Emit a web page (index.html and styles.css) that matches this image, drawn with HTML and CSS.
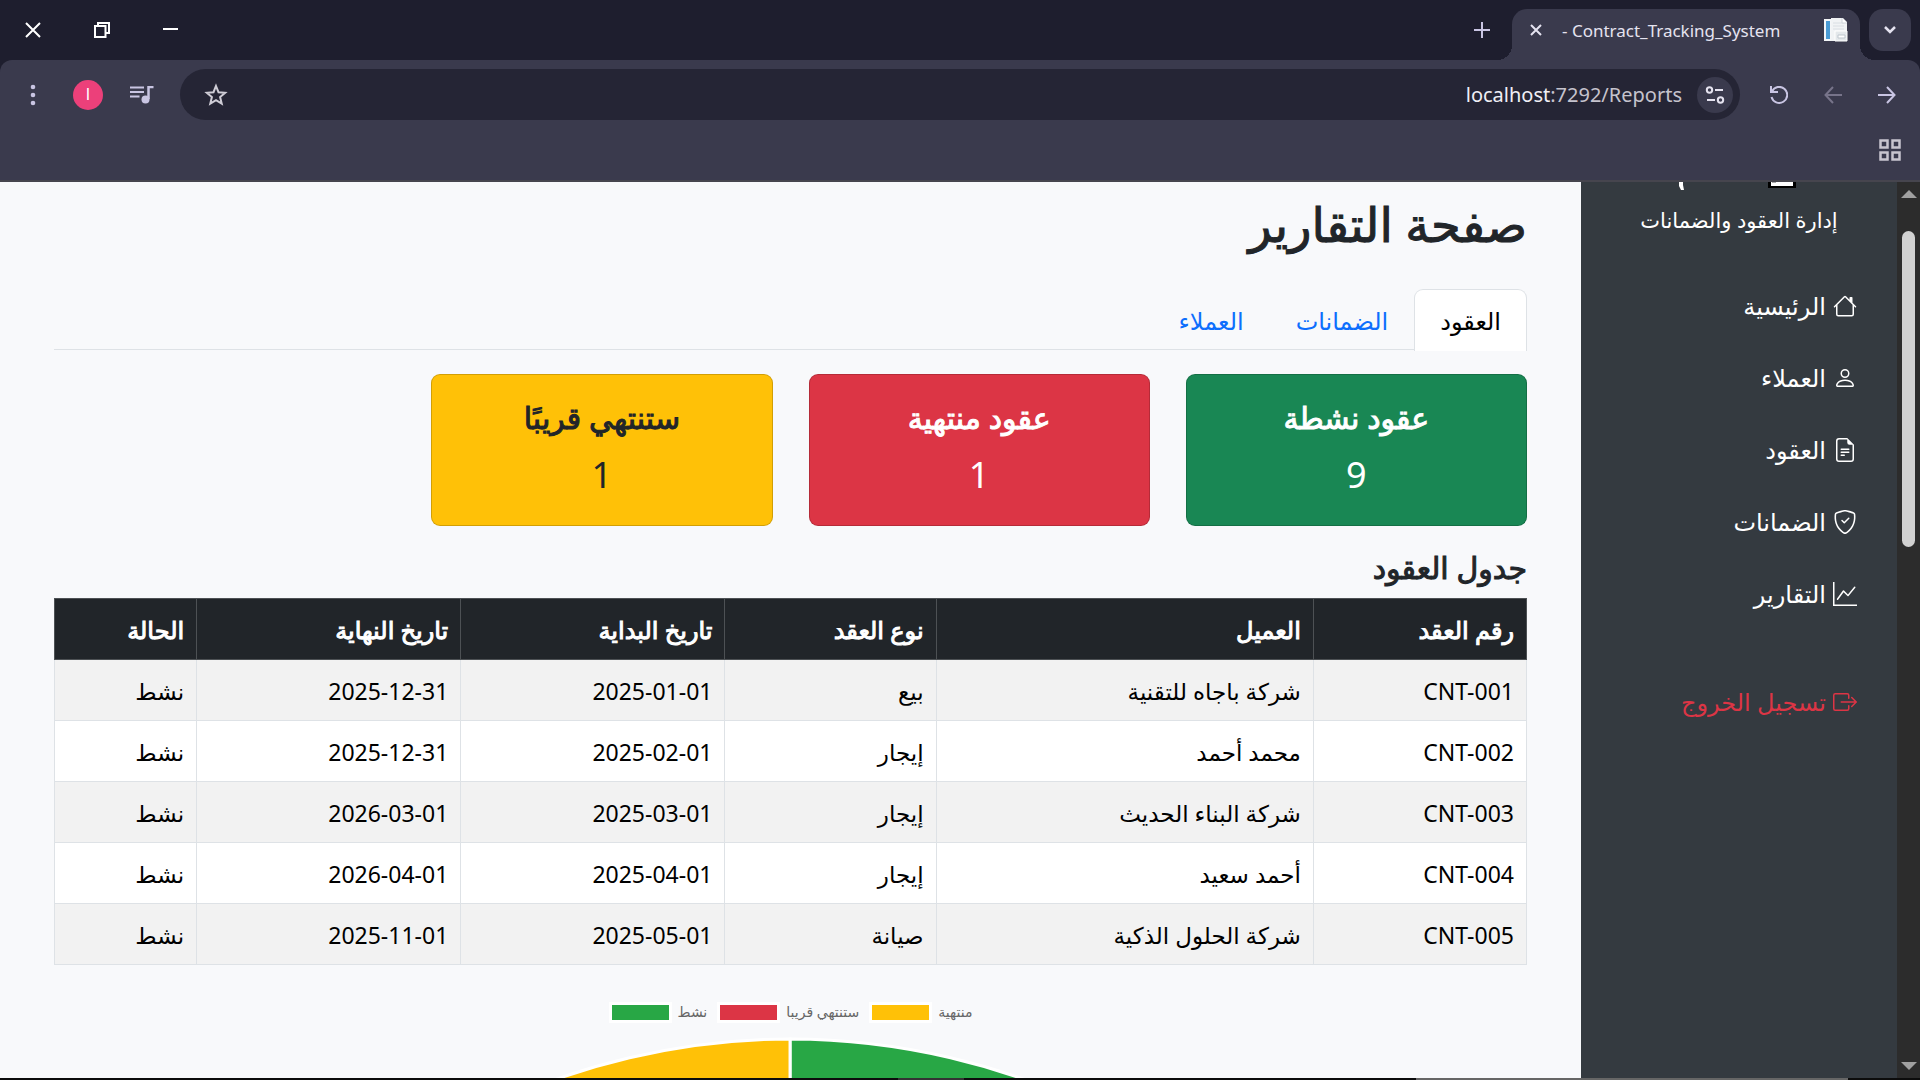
FILE: index.html
```html
<!DOCTYPE html>
<html lang="ar" dir="rtl">
<head>
<meta charset="utf-8">
<title>- Contract_Tracking_System</title>
<link rel="stylesheet" href="styles.css">
</head>
<body>
<div class="window">
  <header class="browser" dir="ltr">
    <div class="tabstrip">
      <div class="window-controls">
        <button class="plain" aria-label="إغلاق"><svg width="16" height="16" viewBox="0 0 16 16"><path d="M1 1l14 14M15 1L1 15" stroke="#fff" stroke-width="2"/></svg></button>
        <button class="plain" aria-label="استعادة"><svg width="16" height="16" viewBox="0 0 16 16" fill="none" stroke="#fff" stroke-width="2"><path d="M1 4h10.500v11H1z"/><path d="M4 4V1h11v10h-3"/></svg></button>
        <button class="plain" aria-label="تصغير"><svg width="16" height="16" viewBox="0 0 16 16"><path d="M0 7h15" stroke="#fff" stroke-width="2"/></svg></button>
      </div>
      <div class="tabs">
        <button class="plain new-tab" aria-label="علامة تبويب جديدة"><svg width="16" height="16" viewBox="0 0 16 16"><path d="M8 0v16M0 8h16" stroke="#c9c5e3" stroke-width="2"/></svg></button>
        <div class="tab">
          <button class="plain" aria-label="إغلاق علامة التبويب"><svg width="12" height="12" viewBox="0 0 12 12"><path d="M1 1l10 10M11 1L1 11" stroke="#e5e3f0" stroke-width="2"/></svg></button>
          <span class="tab-title">- Contract_Tracking_System</span>
          <svg width="24" height="24" viewBox="0 0 24 24"><path d="M0 1h7v22H0z" fill="#f4f6f8"/><path d="M2 3h4v18H2z" fill="#4a9bd4"/><path d="M7 0h12l4 4v19H7z" fill="#f1f3f5"/><path d="M9 5h11M9 8h11M9 11h11" stroke="#d9dee3"/><path d="M18 0v5h5" fill="#fff" stroke="#cfd4da"/><path d="M11 13h12v10H11z" fill="#e4e8eb" stroke="#fff"/><path d="M14 17h7v3h-7z" fill="#fff" stroke="#bfc7ce"/></svg>
        </div>
        <button class="tab-search" aria-label="بحث في علامات التبويب"><svg width="12" height="8" viewBox="0 0 12 8"><path d="M1 1l5 5 5-5" fill="none" stroke="#e5e3f0" stroke-width="2.500"/></svg></button>
      </div>
    </div>
    <div class="toolbar">
      <div class="tool-group">
        <button class="plain" aria-label="القائمة"><svg width="6" height="24" viewBox="0 0 6 24" fill="#c9c5e3"><circle cx="3" cy="4" r="2.300"/><circle cx="3" cy="12" r="2.300"/><circle cx="3" cy="20" r="2.300"/></svg></button>
        <button class="avatar">I</button>
        <button class="plain" aria-label="الوسائط"><svg width="24" height="18" viewBox="0 0 24 18"><path d="M0 1.500h14M0 6h14M0 10.500h9.500" stroke="#c9c5e3" stroke-width="2"/><path d="M18.500 13V1h5" fill="none" stroke="#c9c5e3" stroke-width="2.500"/><circle cx="15.500" cy="13.500" r="4" fill="#c9c5e3"/></svg></button>
      </div>
      <div class="omnibox">
        <button class="plain" aria-label="إضافة إشارة"><svg width="24" height="24" viewBox="0 0 24 24"><path d="M12 3l2.500 6.200 6.700.5-5.100 4.400 1.600 6.500-5.700-3.500-5.700 3.500 1.600-6.500L2.800 9.700l6.700-.5z" fill="none" stroke="#cfcdd6" stroke-width="2"/></svg></button>
        <div class="address"><span class="host">localhost</span><span>:7292/Reports</span></div>
        <button class="site-info" aria-label="معلومات الموقع"><svg width="20" height="18" viewBox="0 0 20 18" fill="none" stroke="#e5e3f0" stroke-width="2"><circle cx="4.500" cy="4" r="2.700"/><path d="M10 4h8M2 14h8"/><circle cx="15.500" cy="14" r="2.700"/></svg></button>
      </div>
      <div class="tool-group nav-group">
        <button class="plain" aria-label="إعادة التحميل"><svg width="18" height="18" viewBox="0 0 18 18" fill="none" stroke="#c9c5e3" stroke-width="2"><path d="M1 0v6h7M2 5.500A8 8 0 1 1 1.500 11"/></svg></button>
        <button class="plain" aria-label="التالي"><svg width="18" height="18" viewBox="0 0 18 18" fill="none" stroke="#77748a" stroke-width="2"><path d="M18 9H2M9 1L1.500 9 9 17"/></svg></button>
        <button class="plain" aria-label="السابق"><svg width="18" height="18" viewBox="0 0 18 18" fill="none" stroke="#c9c5e3" stroke-width="2"><path d="M0 9h16M9 1l7.500 8L9 17"/></svg></button>
      </div>
    </div>
    <div class="bookmarks">
      <button class="plain" aria-label="التطبيقات"><svg width="22" height="22" viewBox="0 0 22 22" fill="none" stroke="#c8c5cf" stroke-width="2.500"><path d="M1.500 1.500h7v7h-7zM13.500 1.500h7v7h-7zM1.500 13.500h7v7h-7zM13.500 13.500h7v7h-7z"/></svg></button>
    </div>
  </header>

  <div class="viewport">
    <div class="scrollbar" aria-hidden="true">
      <svg width="16" height="8" viewBox="0 0 16 8"><path d="M8 0l8 8H0z" fill="#a0a0a0"/></svg>
      <div class="track"><div class="thumb"></div></div>
      <svg width="16" height="8" viewBox="0 0 16 8"><path d="M0 0h16L8 8z" fill="#a0a0a0"/></svg>
    </div>
    <aside class="sidebar">
      <div class="brand">
        <svg width="120" height="8" viewBox="0 0 120 8"><path d="M0 0h4v3l1 5H2L0 4z" fill="#fff"/><path d="M89 0h28v6H89z" fill="#000"/><path d="M92 0h22v4H92z" fill="#fff"/><path d="M93 0h4v1h-4z" fill="#aaa"/></svg>
        <p class="brand-sub">إدارة العقود والضمانات</p>
      </div>
      <nav class="menu">
        <a href="#"><svg class="icon" viewBox="0 0 16 16"><path d="M8.707 1.500a1 1 0 0 0-1.414 0L.646 8.146a.5.5 0 0 0 .708.708L2 8.207V13.500A1.500 1.500 0 0 0 3.500 15h9a1.500 1.500 0 0 0 1.500-1.500V8.207l.646.647a.5.5 0 0 0 .708-.708L13 5.793V2.500a.5.5 0 0 0-.5-.5h-1a.5.5 0 0 0-.5.5v1.293zM13 7.207V13.500a.5.5 0 0 1-.5.5h-9a.5.5 0 0 1-.5-.5V7.207l5-5z"/></svg>الرئيسية</a>
        <a href="#"><svg class="icon" viewBox="0 0 16 16"><path d="M8 8a3 3 0 1 0 0-6 3 3 0 0 0 0 6m2-3a2 2 0 1 1-4 0 2 2 0 0 1 4 0m4 8c0 1-1 1-1 1H3s-1 0-1-1 1-4 6-4 6 3 6 4m-1-.004c-.001-.246-.154-.986-.832-1.664C11.516 10.680 10.289 10 8 10s-3.516.68-4.168 1.332c-.678.678-.83 1.418-.832 1.664z"/></svg>العملاء</a>
        <a href="#"><svg class="icon" viewBox="0 0 16 16"><path d="M5.500 7a.5.5 0 0 0 0 1h5a.5.5 0 0 0 0-1zM5 9.500a.5.5 0 0 1 .5-.5h5a.5.5 0 0 1 0 1h-5a.5.5 0 0 1-.5-.5m0 2a.5.5 0 0 1 .5-.5h2a.5.5 0 0 1 0 1h-2a.5.5 0 0 1-.5-.5"/><path d="M9.500 0H4a2 2 0 0 0-2 2v12a2 2 0 0 0 2 2h8a2 2 0 0 0 2-2V4.500zm0 1v2A1.500 1.500 0 0 0 11 4.500h2V14a1 1 0 0 1-1 1H4a1 1 0 0 1-1-1V2a1 1 0 0 1 1-1z"/></svg>العقود</a>
        <a href="#"><svg class="icon" viewBox="0 0 16 16"><path d="M5.338 1.590a61 61 0 0 0-2.837.856.480.480 0 0 0-.328.390c-.554 4.157.726 7.190 2.253 9.188a10.700 10.700 0 0 0 2.287 2.233c.346.244.652.420.893.533q.180.085.293.118a1 1 0 0 0 .101.025 1 1 0 0 0 .100-.025q.114-.034.294-.118c.240-.113.547-.290.893-.533a10.700 10.700 0 0 0 2.287-2.233c1.527-1.997 2.807-5.031 2.253-9.188a.480.480 0 0 0-.328-.390c-.651-.213-1.750-.560-2.837-.855C9.552 1.290 8.531 1.067 8 1.067c-.530 0-1.552.223-2.662.524zM5.072.560C6.157.265 7.310 0 8 0s1.843.265 2.928.560c1.110.300 2.229.655 2.887.870a1.540 1.540 0 0 1 1.044 1.262c.596 4.477-.787 7.795-2.465 9.990a11.800 11.800 0 0 1-2.517 2.453 7 7 0 0 1-1.048.625c-.280.132-.581.240-.829.240s-.548-.108-.829-.240a7 7 0 0 1-1.048-.625 11.800 11.800 0 0 1-2.517-2.453C1.928 10.487.545 7.169 1.141 2.692A1.540 1.540 0 0 1 2.185 1.430 63 63 0 0 1 5.072.560"/><path d="M10.854 5.146a.5.5 0 0 1 0 .708l-3 3a.5.5 0 0 1-.708 0l-1.500-1.500a.5.5 0 1 1 .708-.708L7.500 7.793l2.646-2.647a.5.5 0 0 1 .708 0"/></svg>الضمانات</a>
        <a href="#"><svg class="icon" viewBox="0 0 16 16"><path d="M0 0h1v15h15v1H0zm14.817 3.113a.5.5 0 0 1 .070.704l-4.500 5.500a.5.5 0 0 1-.740.037L7.060 6.767l-3.656 5.027a.5.5 0 0 1-.808-.588l4-5.500a.5.5 0 0 1 .758-.060l2.609 2.610 4.150-5.073a.5.5 0 0 1 .704-.070"/></svg>التقارير</a>
        <a href="#" class="logout"><svg class="icon" viewBox="0 0 16 16"><path d="M10 12.500a.5.5 0 0 1-.5.5h-8a.5.5 0 0 1-.5-.5v-9a.5.5 0 0 1 .5-.5h8a.5.5 0 0 1 .5.5v2a.5.5 0 0 0 1 0v-2A1.500 1.500 0 0 0 9.500 2h-8A1.500 1.500 0 0 0 0 3.500v9A1.500 1.500 0 0 0 1.500 14h8a1.500 1.500 0 0 0 1.500-1.500v-2a.5.5 0 0 0-1 0z"/><path d="M15.854 8.354a.5.5 0 0 0 0-.708l-3-3a.5.5 0 0 0-.708.708L14.293 7.500H5.500a.5.5 0 0 0 0 1h8.793l-2.147 2.146a.5.5 0 0 0 .708.708z"/></svg>تسجيل الخروج</a>
      </nav>
    </aside>
    <main class="content">
      <h1>صفحة التقارير</h1>
      <div class="nav-tabs" role="tablist">
        <button class="nav-tab active" role="tab">العقود</button>
        <button class="nav-tab" role="tab">الضمانات</button>
        <button class="nav-tab" role="tab">العملاء</button>
      </div>
      <section class="cards">
        <div class="card green"><h2>عقود نشطة</h2><p>9</p></div>
        <div class="card red"><h2>عقود منتهية</h2><p>1</p></div>
        <div class="card yellow"><h2>ستنتهي قريبًا</h2><p>1</p></div>
      </section>
      <h2 class="table-title">جدول العقود</h2>
      <table>
        <colgroup><col class="c-id"><col class="c-client"><col class="c-type"><col class="c-date"><col class="c-date"><col class="c-state"></colgroup>
        <thead><tr><th>رقم العقد</th><th>العميل</th><th>نوع العقد</th><th>تاريخ البداية</th><th>تاريخ النهاية</th><th>الحالة</th></tr></thead>
        <tbody>
          <tr><td>CNT-001</td><td>شركة باجاه للتقنية</td><td>بيع</td><td>2025-01-01</td><td>2025-12-31</td><td>نشط</td></tr>
          <tr><td>CNT-002</td><td>محمد أحمد</td><td>إيجار</td><td>2025-02-01</td><td>2025-12-31</td><td>نشط</td></tr>
          <tr><td>CNT-003</td><td>شركة البناء الحديث</td><td>إيجار</td><td>2025-03-01</td><td>2026-03-01</td><td>نشط</td></tr>
          <tr><td>CNT-004</td><td>أحمد سعيد</td><td>إيجار</td><td>2025-04-01</td><td>2026-04-01</td><td>نشط</td></tr>
          <tr><td>CNT-005</td><td>شركة الحلول الذكية</td><td>صيانة</td><td>2025-05-01</td><td>2025-11-01</td><td>نشط</td></tr>
        </tbody>
      </table>
      <div class="chart">
        <div class="legend">
          <span class="swatch s-green"></span><span class="legend-label">نشط</span>
          <span class="swatch s-red"></span><span class="legend-label">ستنتهي قريبا</span>
          <span class="swatch s-yellow"></span><span class="legend-label">منتهية</span>
        </div>
        <svg class="pie" viewBox="0 0 1410 1410" stroke="#fff" stroke-width="3"><path d="M705 705V2A703 703 0 0 1 1313 1056z" fill="#28a745"/><path d="M705 705L1313 1056A703 703 0 0 1 97 1056z" fill="#dc3545"/><path d="M705 705L97 1056A703 703 0 0 1 705 2z" fill="#ffc107"/></svg>
      </div>
    </main>
  </div>
  <div class="taskbar-edge" dir="ltr"><span class="edge-dim"></span><span class="edge-light"></span></div>
</div>
</body>
</html>
```
FILE: styles.css
```css
* { box-sizing: border-box; }

body {
  margin: 0;
  font-family: "Noto Sans", "Open Sans", "DejaVu Sans", sans-serif;
  font-size: 24px;
  line-height: 36px;
  color: #212529;
}

button { font: inherit; color: inherit; border: 0; padding: 0; cursor: pointer; }
svg { display: block; flex: none; }
h1, h2, p { margin: 0; }
.plain { background: none; display: flex; }

.window { height: 100vh; display: flex; flex-direction: column; overflow: hidden; }

/* Browser frame */
.browser { flex: none; background: #1e1e2e; }
.tabstrip { display: flex; justify-content: space-between; padding: 9px 9px 0 25px; }
.window-controls { display: flex; gap: 53px; padding-top: 13px; align-items: flex-start; }
.tabs { display: flex; }
.new-tab { padding: 13px 22px 0 0; }
.tab {
  position: relative;
  width: 348px; height: 51px;
  padding: 0 12px 9px 18px;
  display: flex; align-items: center; gap: 20px;
  background: #3a3a4d;
  border-radius: 15px 15px 0 0;
}
.tab::before, .tab::after {
  content: "";
  position: absolute; bottom: 0;
  width: 15px; height: 15px;
}
.tab::before { right: 100%; background: radial-gradient(circle at 0 0, transparent 15px, #3a3a4d 15px); }
.tab::after { left: 100%; background: radial-gradient(circle at 100% 0, transparent 15px, #3a3a4d 15px); }
.tab-title { flex: 1; padding-top: 2px; font-size: 17px; line-height: 24px; color: #e5e3f0; white-space: nowrap; }
.tab-search {
  width: 42px; height: 42px; margin-left: 9px;
  display: flex; align-items: center; justify-content: center;
  background: #3a3a4d; border-radius: 14px;
}
.toolbar {
  display: flex; align-items: center;
  padding: 9px 24px 0 30px;
  background: #3a3a4d;
  border-radius: 12px 12px 0 0;
}
.tool-group { display: flex; align-items: center; gap: 24px; }
.tool-group .plain:first-child { margin-right: 13px; }
.tool-group.nav-group { gap: 36px; }
.nav-group .plain:first-child { margin-right: 0; }
.avatar {
  width: 30px; height: 30px; margin-right: 3px;
  border-radius: 50%;
  background: #ec407a; color: #fff;
  font-family: Roboto, sans-serif;
  font-size: 16px; line-height: 30px;
}
.omnibox {
  flex: 1; height: 51px;
  margin: 0 30px 0 26px; padding: 0 7px 0 24px;
  display: flex; align-items: center;
  background: #252535; border-radius: 26px;
}
.address { flex: 1; text-align: right; font-size: 20px; line-height: 30px; color: #c5c3cd; }
.host { color: #f0eff5; }
.site-info {
  width: 36px; height: 36px; margin-left: 15px;
  display: flex; align-items: center; justify-content: center;
  background: #3a3a4d; border-radius: 50%;
}
.bookmarks {
  height: 62px; padding: 19px 19px 0;
  display: flex; justify-content: flex-end;
  background: #3a3a4d; border-bottom: 2px solid #46454e;
}

/* Page */
.viewport { flex: 1; min-height: 0; display: flex; overflow: hidden; background: #f8f9fb; }
.scrollbar {
  flex: none; width: 23px; padding: 8px 0;
  display: flex; flex-direction: column; align-items: center;
  background: #2c2c2c;
}
.track { flex: 1; width: 13px; padding-top: 33px; }
.thumb { height: 38%; background: #d1d1d1; border-radius: 7px; }

.sidebar { flex: none; width: 316px; background: #343a40; color: #fff; }
.brand { display: flex; flex-direction: column; align-items: center; gap: 14px; }
.brand-sub { font-size: 21px; line-height: 32px; }
.menu { display: flex; flex-direction: column; gap: 36px; padding: 52px 40px 0 0; }
.menu a { display: flex; align-items: center; gap: 7px; color: #fff; text-decoration: none; }
.icon { width: 24px; height: 24px; fill: currentColor; }
.menu .logout { color: #dc3545; margin-top: 36px; }

.content { flex: 1; min-width: 0; padding: 13px 54px 0; }
h1, h2, th { font-weight: 500; -webkit-text-stroke: 1px currentColor; }
h1 { font-size: 48px; line-height: 58px; margin-bottom: 36px; }
.nav-tabs { display: flex; height: 61px; border-bottom: 1px solid #dee2e6; margin-bottom: 24px; }
.nav-tab {
  height: 62px; padding: 0 25px;
  background: none; color: #0d6efd;
  border: 1px solid transparent; border-bottom: 0; border-radius: 9px 9px 0 0;
}
.nav-tab.active { background: #fff; color: #000; border-color: #dee2e6; }

.cards { display: grid; grid-template-columns: repeat(4, 1fr); gap: 36px; margin-bottom: 24px; }
.card { padding: 25px 24px 23px; text-align: center; border: 1px solid rgba(0, 0, 0, .175); border-radius: 9px; color: #fff; }
.card h2, .table-title { font-size: 30px; line-height: 36px; margin-bottom: 12px; }
.card p { font-size: 36px; line-height: 54px; }
.green { background-color: #198754; }
.red { background-color: #dc3545; }
.yellow { background-color: #ffc107; color: #212529; }

table { width: 100%; table-layout: fixed; border-collapse: collapse; color: #000; margin-bottom: 34px; }
th, td { height: 61px; padding: 2px 12px 0; text-align: right; border: 1px solid #dee2e6; white-space: nowrap; }
th { background: #212529; color: #fff; border-color: #4d5154; }
td { background: #fff; font-size: 23px; }
tbody tr:nth-child(odd) td { background: #f2f2f2; }
.c-id { width: 213px; }
.c-client { width: 377px; }
.c-type { width: 211px; }
.c-date { width: 264px; }
.c-state { width: 142px; }

.chart { direction: ltr; display: flex; flex-direction: column; align-items: center; gap: 12px; }
.legend { display: flex; align-items: center; height: 26px; }
.legend-label { font-size: 14px; line-height: 24px; color: #666; direction: rtl; margin: 0 10px 0 6px; }
.legend-label:last-child { margin-right: 0; }
.swatch { width: 63px; height: 21px; border: 3px solid #fff; }
.s-green { background: #28a745; }
.s-red { background: #dc3545; }
.s-yellow { background: #ffc107; }
.pie { width: 96%; }

.taskbar-edge { flex: none; display: flex; justify-content: flex-end; gap: 452px; height: 2px; padding-right: 72px; background: #0c0c0c; }
.edge-dim { width: 66px; background: #333; }
.edge-light { width: 432px; background: #666; }
```
